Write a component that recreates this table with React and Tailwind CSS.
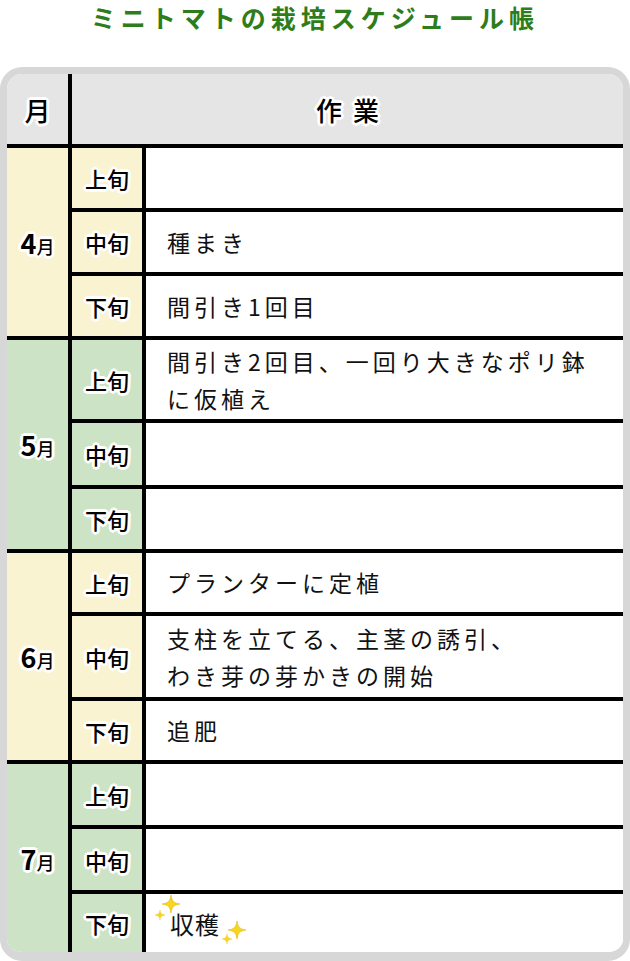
import React from 'react';

const outline =
  '[text-shadow:2px_0_#fff,-2px_0_#fff,0_2px_#fff,0_-2px_#fff,2px_2px_#fff,-2px_-2px_#fff,2px_-2px_#fff,-2px_2px_#fff,3px_0_#fff,-3px_0_#fff,0_3px_#fff,0_-3px_#fff]';

const months = [
  {
    num: '4',
    bg: 'bg-[#faf3d2]',
    rows: [
      { label: '上旬', h: 'h-[64px]', text: '' },
      { label: '中旬', h: 'h-[64px]', text: '種まき' },
      { label: '下旬', h: 'h-[60px]', text: '間引き1回目' },
    ],
  },
  {
    num: '5',
    bg: 'bg-[#cce4c5]',
    rows: [
      { label: '上旬', h: 'h-[83px]', text: '間引き2回目、一回り大きなポリ鉢\nに仮植え' },
      { label: '中旬', h: 'h-[66px]', text: '' },
      { label: '下旬', h: 'h-[60px]', text: '' },
    ],
  },
  {
    num: '6',
    bg: 'bg-[#faf3d2]',
    rows: [
      { label: '上旬', h: 'h-[63px]', text: 'プランターに定植' },
      { label: '中旬', h: 'h-[85px]', text: '支柱を立てる、主茎の誘引、\nわき芽の芽かきの開始' },
      { label: '下旬', h: 'h-[59px]', text: '追肥' },
    ],
  },
  {
    num: '7',
    bg: 'bg-[#cce4c5]',
    rows: [
      { label: '上旬', h: 'h-[65px]', text: '' },
      { label: '中旬', h: 'h-[65px]', text: '' },
      { label: '下旬', h: 'h-[58px]', text: '収穫', sparkle: true },
    ],
  },
];

const Star = ({ className }) => (
  <svg viewBox="0 0 24 24" className={className}>
    <path
      d="M12 0 C13 8 16 11 24 12 C16 13 13 16 12 24 C11 16 8 13 0 12 C8 11 11 8 12 0Z"
      fill="#f8d51e"
      stroke="#e6b80a"
      strokeWidth="0.8"
    />
  </svg>
);

const Row = ({ row, bg, last }) => (
  <div className={`flex ${row.h} ${last ? '' : 'border-b-4 border-black'}`}>
    <div className={`w-[74px] shrink-0 border-r-4 border-black flex items-center justify-center ${bg}`}>
      <span className={`text-[22px] font-medium text-black leading-none ${outline}`}>{row.label}</span>
    </div>
    <div className="relative flex-1 bg-white flex items-center pl-[21px]">
      {row.sparkle ? (
        <>
          {/* sparkles around the harvest */}
          <Star className="absolute left-[16px] top-[1px] w-[18px] h-[18px]" />
          <Star className="absolute left-[9px] top-[16px] w-[10px] h-[10px]" />
          <Star className="absolute left-[82px] top-[27px] w-[18px] h-[18px]" />
          <Star className="absolute left-[76px] top-[40px] w-[10px] h-[10px]" />
          <span className="pl-[3px] pt-[2px] text-[24px] tracking-[1px] text-[#111] leading-[36px]">{row.text}</span>
        </>
      ) : (
        <p className="text-[23px] tracking-[4px] text-[#111] leading-[37px] whitespace-pre-line">{row.text}</p>
      )}
    </div>
  </div>
);

export default function App() {
  return (
    <div className="w-[630px] bg-white font-['Noto_Sans_CJK_JP','Noto_Sans',sans-serif]">
      <h1 className="h-[67px] pt-px text-center text-[25px] leading-[32px] font-bold tracking-[5px] text-[#2e7d1a]">
        ミニトマトの栽培スケジュール帳
      </h1>

      <div className="border-[7px] border-b-[9px] border-[#d7d7d7] rounded-[22px] overflow-hidden">
        {/* header */}
        <div className="flex h-[74px] bg-[#e5e5e5] border-b-4 border-black">
          <div className="w-[65px] shrink-0 border-r-4 border-black flex items-center justify-center">
            <span className={`text-[26px] font-medium text-black ${outline}`}>月</span>
          </div>
          <div className="flex-1 flex items-center justify-center gap-[11px]">
            <span className={`text-[26px] font-medium text-black ${outline}`}>作</span>
            <span className={`text-[26px] font-medium text-black ${outline}`}>業</span>
          </div>
        </div>

        {months.map((m, i) => (
          <div key={m.num} className={`flex ${i < months.length - 1 ? 'border-b-4 border-black' : ''}`}>
            <div className={`w-[65px] shrink-0 border-r-4 border-black flex items-center justify-center ${m.bg}`}>
              <span className={`flex items-baseline text-black ${outline}`}>
                <span className="text-[27px] font-bold leading-none">{m.num}</span>
                <span className="text-[18px] font-medium leading-none">月</span>
              </span>
            </div>
            <div className="flex-1 flex flex-col">
              {m.rows.map((r, j) => (
                <Row key={r.label} row={r} bg={m.bg} last={j === m.rows.length - 1} />
              ))}
            </div>
          </div>
        ))}
      </div>
    </div>
  );
}
